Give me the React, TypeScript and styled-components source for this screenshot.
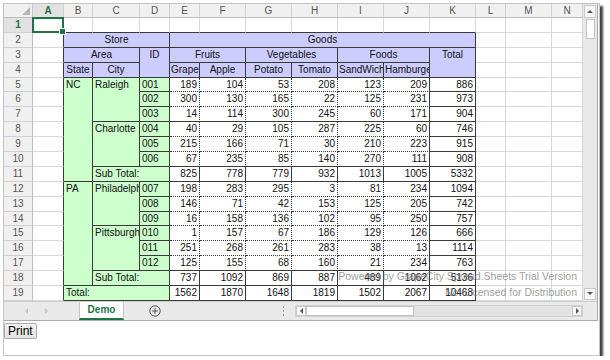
import React from 'react';
import styled, { createGlobalStyle } from 'styled-components';

type B = 'g' | 's' | 'd';

const COLS = [29, 31, 29, 47, 30, 30, 46, 46, 46, 46, 46, 46, 30, 46, 31];
const LETTERS = ['A', 'B', 'C', 'D', 'E', 'F', 'G', 'H', 'I', 'J', 'K', 'L', 'M', 'N'];
const ROW_H = 14.9;
const LAV = '#ccccff';
const GRN = '#ccffcc';

const line = (k?: B) =>
  k === 's' ? '1px solid #3a3a3a' : k === 'd' ? '1px dotted #3a3a3a' : '1px solid #d8d8d8';

const GlobalStyle = createGlobalStyle`
  html, body { margin: 0; padding: 0; background: #fff; }
  body { font-family: "Liberation Sans", Arial, sans-serif; }
`;

const Frame = styled.div`
  margin: 3px 0 0 3px;
  width: 597px;
  height: 353px;
  box-sizing: border-box;
  border: 1px solid #c4c4c4;
  box-shadow: 3px 3px 2px rgba(0, 0, 0, 0.75);
  background: #fff;
  display: flex;
  flex-direction: column;
`;

const Host = styled.div`
  display: grid;
  grid-template-columns: 579px 14px;
  grid-template-rows: auto 19px;
  width: 594px;
  box-sizing: border-box;
  border-right: 1px solid #ababab;
  border-bottom: 1px solid #ababab;
`;

const Sheet = styled.div`
  position: relative;
  display: grid;
  grid-template-columns: ${COLS.map((c) => `${c}px`).join(' ')};
  grid-template-rows: 14px repeat(19, ${ROW_H}px);
  overflow: hidden;
  font-family: "Liberation Sans", Arial, sans-serif;
  font-size: 10px;
`;

const Corner = styled.div`
  grid-column: 1;
  grid-row: 1;
  background: #f0f0f0;
  box-sizing: border-box;
  border-right: 1px solid #c8c8c8;
  border-bottom: 1px solid #bdbdbd;
  display: flex;
  align-items: flex-end;
  justify-content: flex-end;
  padding: 0 2px 2px 0;
`;

const ColHeader = styled.div<{ $col: number; $active?: boolean }>`
  grid-column: ${(p) => p.$col};
  grid-row: 1;
  box-sizing: border-box;
  background: ${(p) => (p.$active ? '#e1e1e1' : '#f0f0f0')};
  border-right: 1px solid #d0d0d0;
  border-bottom: 1px solid #bdbdbd;
  color: ${(p) => (p.$active ? '#217346' : '#555')};
  font-weight: ${(p) => (p.$active ? 'bold' : 'normal')};
  text-align: center;
  line-height: 13px;
  font-size: 10px;
`;

const RowHeader = styled.div<{ $row: number; $active?: boolean }>`
  grid-column: 1;
  grid-row: ${(p) => p.$row};
  box-sizing: border-box;
  background: ${(p) => (p.$active ? '#e1e1e1' : '#f0f0f0')};
  border-right: 1px solid #bdbdbd;
  border-bottom: 1px solid #d0d0d0;
  color: ${(p) => (p.$active ? '#217346' : '#555')};
  font-weight: ${(p) => (p.$active ? 'bold' : 'normal')};
  text-align: center;
  line-height: ${ROW_H - 1}px;
  font-size: 10px;
`;

const Cell = styled.div<{
  $col: number;
  $row: number;
  $cs?: number;
  $rs?: number;
  $bg?: string;
  $align?: 'left' | 'center' | 'right';
  $br?: B;
  $bb?: B;
}>`
  grid-column: ${(p) => p.$col} / span ${(p) => p.$cs ?? 1};
  grid-row: ${(p) => p.$row} / span ${(p) => p.$rs ?? 1};
  box-sizing: border-box;
  min-width: 0;
  background: ${(p) => p.$bg ?? '#fff'};
  border-right: ${(p) => line(p.$br)};
  border-bottom: ${(p) => line(p.$bb)};
  padding: 0 2px;
  line-height: ${ROW_H - 1}px;
  text-align: ${(p) => p.$align ?? 'left'};
  white-space: nowrap;
  overflow: hidden;
  color: #111;
`;

const HeadCell = styled(Cell)`
  padding: 0 1px;
`;

const SelectedCell = styled.div`
  grid-column: 2;
  grid-row: 2;
  position: relative;
  z-index: 2;
  box-sizing: border-box;
  border: 2px solid #217346;
  margin: -1px 0 0 -1px;
`;

const FillHandle = styled.span`
  position: absolute;
  right: -4px;
  bottom: -4px;
  width: 5px;
  height: 5px;
  background: #217346;
  border: 1px solid #fff;
`;

const Watermark = styled.div`
  position: absolute;
  right: 6px;
  bottom: 1px;
  text-align: right;
  line-height: 16px;
  font-size: 10.5px;
  color: rgba(110, 110, 110, 0.7);
  pointer-events: none;
  z-index: 3;
`;

const VScroll = styled.div`
  background: #e8e8e8;
  display: flex;
  flex-direction: column;
  align-items: center;
  padding: 1px 0 1px;
  box-sizing: border-box;
`;

const ScrollBtn = styled.div<{ $w: number; $h: number }>`
  width: ${(p) => p.$w}px;
  height: ${(p) => p.$h}px;
  flex: none;
  box-sizing: border-box;
  background: #f7f7f7;
  border: 1px solid #c9c9c9;
  display: flex;
  align-items: center;
  justify-content: center;
`;

const VThumb = styled.div`
  width: 9px;
  height: 20px;
  margin-top: 1px;
  box-sizing: border-box;
  background: #fff;
  border: 1px solid #c3c3c3;
`;

const Fill = styled.div`
  flex: 1;
`;

const TabBar = styled.div`
  grid-column: 1 / -1;
  display: flex;
  align-items: stretch;
  background: #e9e9e9;
  border-top: 1px solid #cfcfcf;
  box-sizing: border-box;
  height: 19px;
`;

const NavArea = styled.div`
  width: 75px;
  display: flex;
  align-items: center;
  padding-left: 20px;
  gap: 15px;
  box-sizing: border-box;
`;

const Tab = styled.div`
  width: 45px;
  background: #fff;
  border-left: 1px solid #c6c6c6;
  border-right: 1px solid #c6c6c6;
  border-bottom: 2px solid #217346;
  box-sizing: border-box;
  display: flex;
  align-items: center;
  justify-content: center;
  font-size: 10px;
  font-weight: bold;
  color: #217346;
`;

const AddArea = styled.div`
  width: 62px;
  display: flex;
  align-items: center;
  justify-content: center;
`;

const Splitter = styled.div`
  width: 6px;
  display: flex;
  flex-direction: column;
  align-items: center;
  justify-content: center;
  gap: 2px;
  margin-right: 9px;
`;

const Dot = styled.span`
  width: 1px;
  height: 2px;
  background: #9a9a9a;
`;

const HScroll = styled.div`
  width: 288px;
  height: 12px;
  align-self: center;
  display: flex;
  background: #e2e2e2;
  border: 1px solid #d0d0d0;
  box-sizing: border-box;
`;

const HThumb = styled.div`
  width: 108px;
  background: #fff;
  border: 1px solid #c3c3c3;
  box-sizing: border-box;
`;

const CornerBox = styled.div`
  width: 14px;
`;

const PrintButton = styled.button`
  align-self: flex-start;
  margin-top: 2px;
  height: 16px;
  padding: 0 3px;
  font-family: "Liberation Sans", Arial, sans-serif;
  font-size: 12px;
  line-height: 14px;
  color: #000;
  background: linear-gradient(#f2f2f2, #e3e3e3);
  border: 1px solid #adadad;
  border-radius: 2px;
`;

const Arrow: React.FC<{ dir: 'up' | 'down' | 'left' | 'right'; color?: string }> = ({ dir, color = '#555' }) => {
  const pts = {
    up: '0,4 3,1 6,4',
    down: '0,1 3,4 6,1',
    left: '4,0 1,3 4,6',
    right: '1,0 4,3 1,6',
  }[dir];
  const w = dir === 'up' || dir === 'down' ? 6 : 5;
  const h = dir === 'up' || dir === 'down' ? 5 : 6;
  return (
    <svg width={w} height={h} viewBox={`0 0 ${w} ${h}`}>
      <polygon points={pts} fill={color} />
    </svg>
  );
};

const PlusCircle = () => (
  <svg width="12" height="12" viewBox="0 0 12 12">
    <circle cx="6" cy="6" r="5.2" fill="none" stroke="#555" strokeWidth="1" />
    <path d="M6 3.2v5.6M3.2 6h5.6" stroke="#555" strokeWidth="1" />
  </svg>
);

type DataRow = { r: number; id?: string; v: number[]; kind: 'data' | 'sub' | 'total'; blockEnd?: boolean };

const DATA: DataRow[] = [
  { r: 5, id: '001', v: [189, 104, 53, 208, 123, 209, 886], kind: 'data' },
  { r: 6, id: '002', v: [300, 130, 165, 22, 125, 231, 973], kind: 'data' },
  { r: 7, id: '003', v: [14, 114, 300, 245, 60, 171, 904], kind: 'data', blockEnd: true },
  { r: 8, id: '004', v: [40, 29, 105, 287, 225, 60, 746], kind: 'data' },
  { r: 9, id: '005', v: [215, 166, 71, 30, 210, 223, 915], kind: 'data' },
  { r: 10, id: '006', v: [67, 235, 85, 140, 270, 111, 908], kind: 'data', blockEnd: true },
  { r: 11, v: [825, 778, 779, 932, 1013, 1005, 5332], kind: 'sub' },
  { r: 12, id: '007', v: [198, 283, 295, 3, 81, 234, 1094], kind: 'data' },
  { r: 13, id: '008', v: [146, 71, 42, 153, 125, 205, 742], kind: 'data' },
  { r: 14, id: '009', v: [16, 158, 136, 102, 95, 250, 757], kind: 'data' },
  { r: 15, id: '010', v: [1, 157, 67, 186, 129, 126, 666], kind: 'data' },
  { r: 16, id: '011', v: [251, 268, 261, 283, 38, 13, 1114], kind: 'data' },
  { r: 17, id: '012', v: [125, 155, 68, 160, 21, 234, 763], kind: 'data', blockEnd: true },
  { r: 18, v: [737, 1092, 869, 887, 489, 1062, 5136], kind: 'sub' },
  { r: 19, v: [1562, 1870, 1648, 1819, 1502, 2067, 10468], kind: 'total' },
];

// grid row for sheet row n
const gr = (n: number) => n + 1;

const App: React.FC = () => {
  const empties: React.ReactNode[] = [];
  for (let r = 1; r <= 19; r++) {
    for (let c = 2; c <= 15; c++) {
      const inTable = r >= 2 && c >= 3 && c <= 12;
      if (inTable) continue;
      if (r === 1 && c === 2) continue;
      const br: B = c === 2 && r >= 2 ? 's' : 'g';
      const bb: B = r === 1 && c >= 3 && c <= 12 ? 's' : 'g';
      empties.push(<Cell key={`e${r}-${c}`} $col={c} $row={gr(r)} $br={br} $bb={bb} />);
    }
  }

  const green = [
    { t: 'NC', c: 3, r: 5, rs: 7 },
    { t: 'Raleigh', c: 4, r: 5, rs: 3 },
    { t: 'Charlotte', c: 4, r: 8, rs: 3 },
    { t: 'Sub Total:', c: 4, r: 11, cs: 2 },
    { t: 'PA', c: 3, r: 12, rs: 7 },
    { t: 'Philadelphia', c: 4, r: 12, rs: 3 },
    { t: 'Pittsburgh', c: 4, r: 15, rs: 3 },
    { t: 'Sub Total:', c: 4, r: 18, cs: 2 },
    { t: 'Total:', c: 3, r: 19, cs: 3 },
  ];

  const heads = [
    { t: 'Store', c: 3, r: 2, cs: 3 },
    { t: 'Goods', c: 6, r: 2, cs: 7 },
    { t: 'Area', c: 3, r: 3, cs: 2 },
    { t: 'ID', c: 5, r: 3, rs: 2 },
    { t: 'Fruits', c: 6, r: 3, cs: 2 },
    { t: 'Vegetables', c: 8, r: 3, cs: 2 },
    { t: 'Foods', c: 10, r: 3, cs: 2 },
    { t: 'Total', c: 12, r: 3, rs: 2 },
    { t: 'State', c: 3, r: 4 },
    { t: 'City', c: 4, r: 4 },
    { t: 'Grape', c: 6, r: 4 },
    { t: 'Apple', c: 7, r: 4 },
    { t: 'Potato', c: 8, r: 4 },
    { t: 'Tomato', c: 9, r: 4 },
    { t: 'SandWich', c: 10, r: 4 },
    { t: 'Hamburger', c: 11, r: 4 },
  ];

  return (
    <>
      <GlobalStyle />
      <Frame>
        <Host>
          <Sheet>
            <Corner>
              <svg width="8" height="8" viewBox="0 0 8 8">
                <polygon points="8,0 8,8 0,8" fill="#b5b5b5" />
              </svg>
            </Corner>
            {LETTERS.map((l, i) => (
              <ColHeader key={l} $col={i + 2} $active={i === 0}>
                {l}
              </ColHeader>
            ))}
            {Array.from({ length: 19 }, (_, i) => (
              <RowHeader key={i} $row={i + 2} $active={i === 0}>
                {i + 1}
              </RowHeader>
            ))}
            {empties}
            <SelectedCell>
              <FillHandle />
            </SelectedCell>

            {heads.map((h) => (
              <HeadCell
                key={h.t}
                $col={h.c}
                $row={gr(h.r)}
                $cs={h.cs}
                $rs={h.rs}
                $bg={LAV}
                $align="center"
                $br="s"
                $bb="s"
              >
                {h.t}
              </HeadCell>
            ))}

            {green.map((g, i) => (
              <Cell
                key={`g${i}`}
                $col={g.c}
                $row={gr(g.r)}
                $cs={g.cs}
                $rs={g.rs}
                $bg={GRN}
                $br="s"
                $bb="s"
              >
                {g.t}
              </Cell>
            ))}

            {DATA.filter((d) => d.id).map((d) => (
              <Cell key={`id${d.r}`} $col={5} $row={gr(d.r)} $bg={GRN} $br="s" $bb="s">
                {d.id}
              </Cell>
            ))}

            {DATA.map((d) =>
              d.v.map((v, i) => {
                const isK = i === 6;
                const solidRow = d.kind !== 'data';
                const br: B = isK || i === 5 || solidRow ? 's' : 'd';
                const bb: B = isK || solidRow || d.blockEnd ? 's' : 'd';
                return (
                  <Cell key={`v${d.r}-${i}`} $col={6 + i} $row={gr(d.r)} $align="right" $br={br} $bb={bb}>
                    {v}
                  </Cell>
                );
              })
            )}

            <Watermark>
              Powered by GrapeCity Spread.Sheets Trial Version
              <br />
              Not Licensed for Distribution
            </Watermark>
          </Sheet>

          <VScroll>
            <ScrollBtn $w={12} $h={13}>
              <Arrow dir="up" />
            </ScrollBtn>
            <VThumb />
            <Fill />
            <ScrollBtn $w={12} $h={12}>
              <Arrow dir="down" />
            </ScrollBtn>
          </VScroll>

          <TabBar>
            <NavArea>
              <Arrow dir="left" color="#c4c4c4" />
              <Arrow dir="right" color="#c4c4c4" />
            </NavArea>
            <Tab>Demo</Tab>
            <AddArea>
              <PlusCircle />
            </AddArea>
            <Fill />
            <Splitter>
              <Dot />
              <Dot />
              <Dot />
            </Splitter>
            <HScroll>
              <ScrollBtn $w={10} $h={10}>
                <Arrow dir="left" />
              </ScrollBtn>
              <HThumb />
              <Fill />
              <ScrollBtn $w={10} $h={10}>
                <Arrow dir="right" />
              </ScrollBtn>
            </HScroll>
            <CornerBox />
          </TabBar>
        </Host>
        <PrintButton>Print</PrintButton>
      </Frame>
    </>
  );
};

export default App;
